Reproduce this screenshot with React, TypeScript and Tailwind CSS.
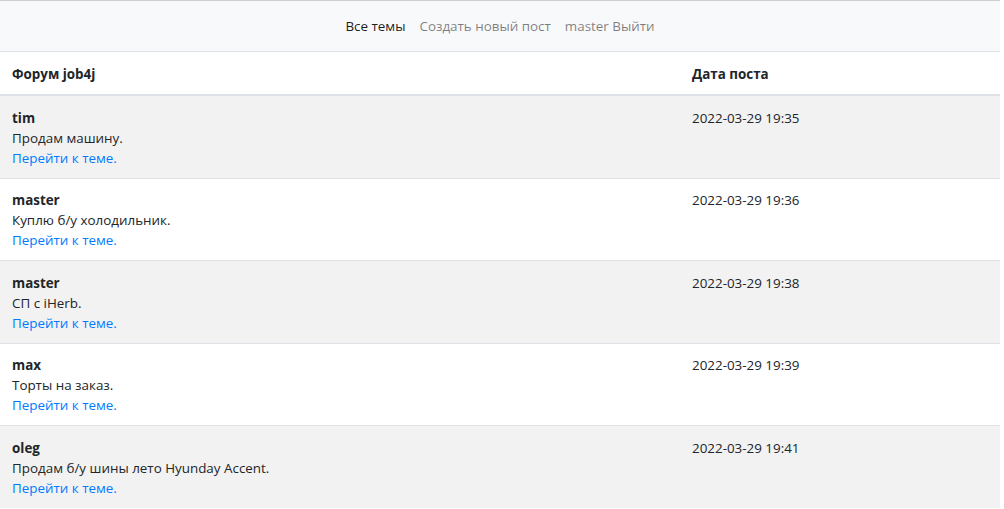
import React from "react";

const posts = [
  { user: "tim", text: "Продам машину.", date: "2022-03-29 19:35" },
  { user: "master", text: "Куплю б/у холодильник.", date: "2022-03-29 19:36" },
  { user: "master", text: "СП с iHerb.", date: "2022-03-29 19:38" },
  { user: "max", text: "Торты на заказ.", date: "2022-03-29 19:39" },
  { user: "oleg", text: "Продам б/у шины лето Hyunday Accent.", date: "2022-03-29 19:41" },
];

export default function App() {
  return (
    <div
      className="w-[1000px] bg-white text-[#212529] text-[13.4px] leading-[20px] border-t border-[#cfcfcf]"
      style={{ fontFamily: '"Open Sans", "Noto Sans", sans-serif' }}
    >
      <nav className="h-[50px] bg-[#f8f9fa] flex items-center justify-center">
        <a className="px-[7px] text-black/90">Все темы</a>
        <a className="px-[7px] text-black/50">Создать новый пост</a>
        <a className="px-[7px] text-black/50">master Выйти</a>
      </nav>
      <table className="w-full border-collapse">
        <thead>
          <tr>
            <th className="text-left font-bold px-3 pt-[12px] pb-[10px] border-t border-b-2 border-[#dee2e6] w-[680px]">Форум job4j</th>
            <th className="text-left font-bold px-3 pt-[12px] pb-[10px] border-t border-b-2 border-[#dee2e6]">Дата поста</th>
          </tr>
        </thead>
        <tbody>
          {posts.map((p, i) => (
            <tr key={i} className={i % 2 === 0 ? "bg-[#f2f2f2]" : "bg-white"}>
              <td className={"align-top px-3 pt-[11.5px] pb-[10px] border-[#dee2e6] " + (i === 0 ? "" : "border-t")}>
                <div className="font-bold">{p.user}</div>
                <div>{p.text}</div>
                <a className="text-[#007bff]">Перейти к теме.</a>
              </td>
              <td className={"align-top px-3 pt-[11.5px] pb-[10px] border-[#dee2e6] " + (i === 0 ? "" : "border-t")}>
                {p.date}
              </td>
            </tr>
          ))}
        </tbody>
      </table>
    </div>
  );
}
